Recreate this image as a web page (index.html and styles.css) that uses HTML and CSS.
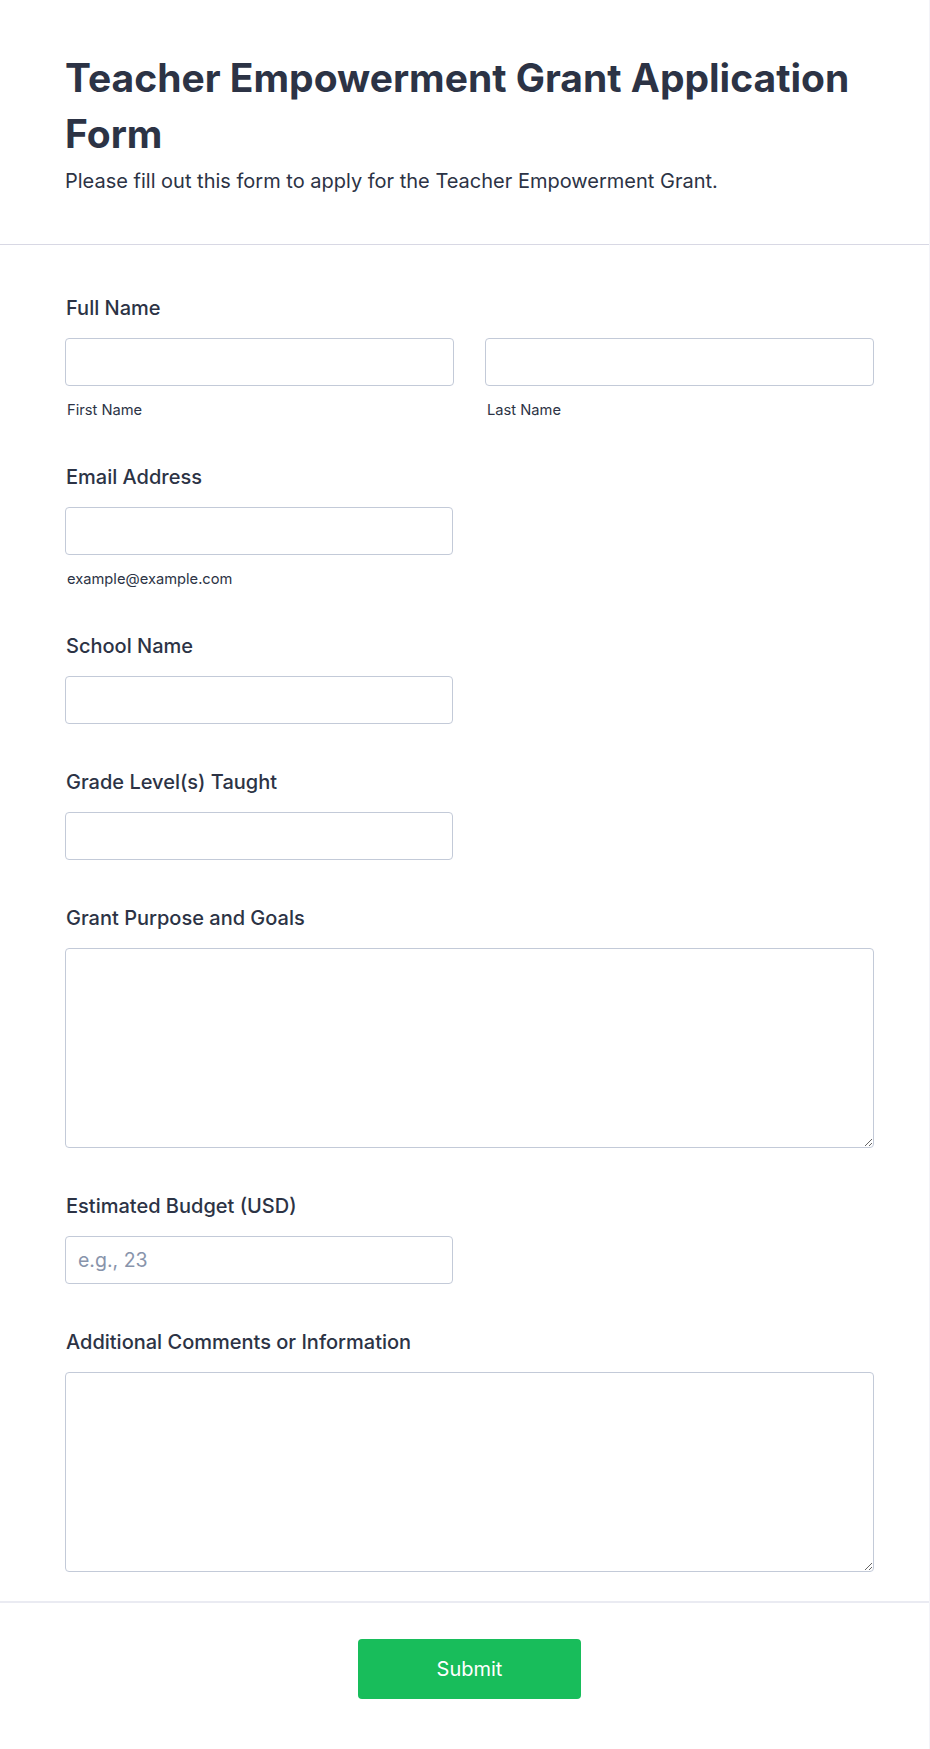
FILE: index.html
```html
<!DOCTYPE html>
<html lang="en">
<head>
<meta charset="utf-8">
<title>Teacher Empowerment Grant Application Form</title>
<link rel="stylesheet" href="styles.css">
</head>
<body>
<div class="page">
  <header class="form-header">
    <h1 class="form-title">Teacher Empowerment Grant Application Form</h1>
    <p class="form-subtitle">Please fill out this form to apply for the Teacher Empowerment Grant.</p>
  </header>
  <main class="form-body">
    <div class="field">
      <label class="field-label">Full Name</label>
      <div class="name-row">
        <div class="name-col">
          <input class="text-input" type="text">
          <span class="sublabel">First Name</span>
        </div>
        <div class="name-col">
          <input class="text-input" type="text">
          <span class="sublabel">Last Name</span>
        </div>
      </div>
    </div>
    <div class="field">
      <label class="field-label">Email Address</label>
      <input class="text-input short" type="email">
      <span class="sublabel">example@example.com</span>
    </div>
    <div class="field">
      <label class="field-label">School Name</label>
      <input class="text-input short" type="text">
    </div>
    <div class="field">
      <label class="field-label">Grade Level(s) Taught</label>
      <input class="text-input short" type="text">
    </div>
    <div class="field">
      <label class="field-label">Grant Purpose and Goals</label>
      <textarea class="text-area"></textarea>
    </div>
    <div class="field">
      <label class="field-label">Estimated Budget (USD)</label>
      <input class="text-input short" type="text" placeholder="e.g., 23">
    </div>
    <div class="field">
      <label class="field-label">Additional Comments or Information</label>
      <textarea class="text-area"></textarea>
    </div>
  </main>
  <footer class="form-footer">
    <button class="submit-btn" type="button">Submit</button>
  </footer>
</div>
</body>
</html>
```
FILE: styles.css
```css
* { box-sizing: border-box; }
html, body { margin: 0; padding: 0; background: #ffffff; }
body {
  font-family: Inter, "Noto Sans", "Liberation Sans", sans-serif;
  color: #2c3345;
}
.page {
  width: 930px;
  border-right: 1px solid #f3f3f8;
}
.form-header {
  padding: 50px 55px 50px 65px;
  border-bottom: 1px solid #d8d8e4;
}
.form-title {
  margin: 0;
  font-size: 39px;
  line-height: 56px;
  font-weight: 700;
  color: #2c3345;
}
.form-subtitle {
  margin: 6px 0 0;
  font-size: 20px;
  line-height: 26px;
  color: #2c3345;
}
.form-body {
  padding: 51px 55px 29px 65px;
  display: flex;
  flex-direction: column;
  gap: 46px;
}
.field { display: flex; flex-direction: column; }
.field-label {
  font-size: 20px;
  line-height: 24px;
  font-weight: 500;
  margin: 0 0 18px 1px;
}
.name-row { display: flex; gap: 31px; }
.name-col { flex: 1; display: flex; flex-direction: column; }
.text-input {
  height: 48px;
  width: 100%;
  border: 1px solid #c3cad8;
  border-radius: 4px;
  padding: 0 12px;
  font-family: inherit;
  font-size: 19.5px;
  color: #2c3345;
  background: #fff;
}
.text-input.short { width: 388px; }
.text-input::placeholder { color: #8894ab; }
.sublabel {
  font-size: 14.7px;
  line-height: 18px;
  margin: 15px 0 0 2px;
  color: #2c3345;
}
.text-area {
  height: 200px;
  width: 100%;
  border: 1px solid #c3cad8;
  border-radius: 4px;
  font-family: inherit;
  font-size: 18px;
  padding: 10px 12px;
  background: #fff;
}
.form-footer {
  border-top: 2px solid #eaebf2;
  padding: 36px 55px 50px 65px;
  display: flex;
  justify-content: center;
}
.submit-btn {
  width: 223px;
  height: 60px;
  background: #18bd5b;
  border: none;
  border-radius: 4px;
  color: #ffffff;
  font-family: inherit;
  font-size: 20px;
  font-weight: 400;
}
```
